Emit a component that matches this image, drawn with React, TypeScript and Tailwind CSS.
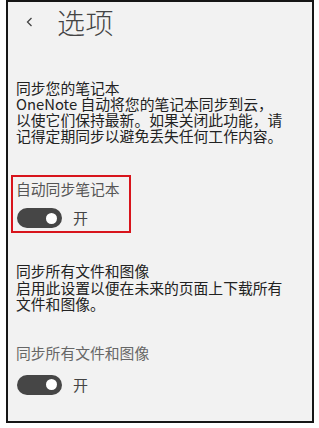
import React from 'react'

function Toggle() {
  return (
    <div className="flex items-center">
      <div className="w-[45px] h-[20px] rounded-full bg-[#464646] flex items-center justify-end pr-[5px]">
        <div className="w-[11px] h-[11px] rounded-full bg-white" />
      </div>
      <span className="ml-[11px] text-[15px] leading-[20px] text-[#444]">开</span>
    </div>
  )
}

function Lines({ lines, className }: { lines: string[]; className?: string }) {
  return (
    <div className={className}>
      {lines.map((l) => (
        <div key={l} className="h-[16px] flex items-center whitespace-nowrap">
          {l}
        </div>
      ))}
    </div>
  )
}

export default function App() {
  return (
    <div className="w-[319px] h-[428px] bg-white font-['Noto_Sans_CJK_SC','Noto_Sans',sans-serif]">
      <div className="ml-[6px] w-[308px] h-[423px] border-2 border-[#161616] bg-[#f2f2f2] flex flex-col pl-[8px] text-[#222] text-[14.8px] leading-[16px]">
        {/* Header */}
        <div className="h-[40px] flex items-center">
          <svg width="8" height="10" viewBox="0 0 8 10" className="ml-[10px]">
            <polyline points="5.5,1 1.5,5 5.5,9" fill="none" stroke="#444" strokeWidth="1.3" />
          </svg>
          <h1 className="ml-[23px] text-[28px] leading-[30px] font-light text-[#444] tracking-[0.5px]">选项</h1>
        </div>

        {/* Sync notebooks */}
        <Lines
          className="mt-[38px]"
          lines={[
            '同步您的笔记本',
            'OneNote 自动将您的笔记本同步到云，',
            '以使它们保持最新。如果关闭此功能，请',
            '记得定期同步以避免丢失任何工作内容。',
          ]}
        />

        {/* Highlighted setting */}
        <div className="mt-[31px] -ml-[5px] w-[120px] border-2 border-[#d8141c] pl-[3px] pt-[4px] pb-[3px]">
          <div className="h-[16px] flex items-center text-[#555] whitespace-nowrap">自动同步笔记本</div>
          <div className="mt-[11px] ml-[1px]">
            <Toggle />
          </div>
        </div>

        {/* Sync files */}
        <Lines
          className="mt-[30px] [&>div]:h-[16.5px]"
          lines={['同步所有文件和图像', '启用此设置以便在未来的页面上下载所有', '文件和图像。']}
        />

        <div className="mt-[32px] h-[16px] flex items-center text-[#666] whitespace-nowrap">同步所有文件和图像</div>
        <div className="mt-[14px] ml-[1px]">
          <Toggle />
        </div>
      </div>
    </div>
  )
}
